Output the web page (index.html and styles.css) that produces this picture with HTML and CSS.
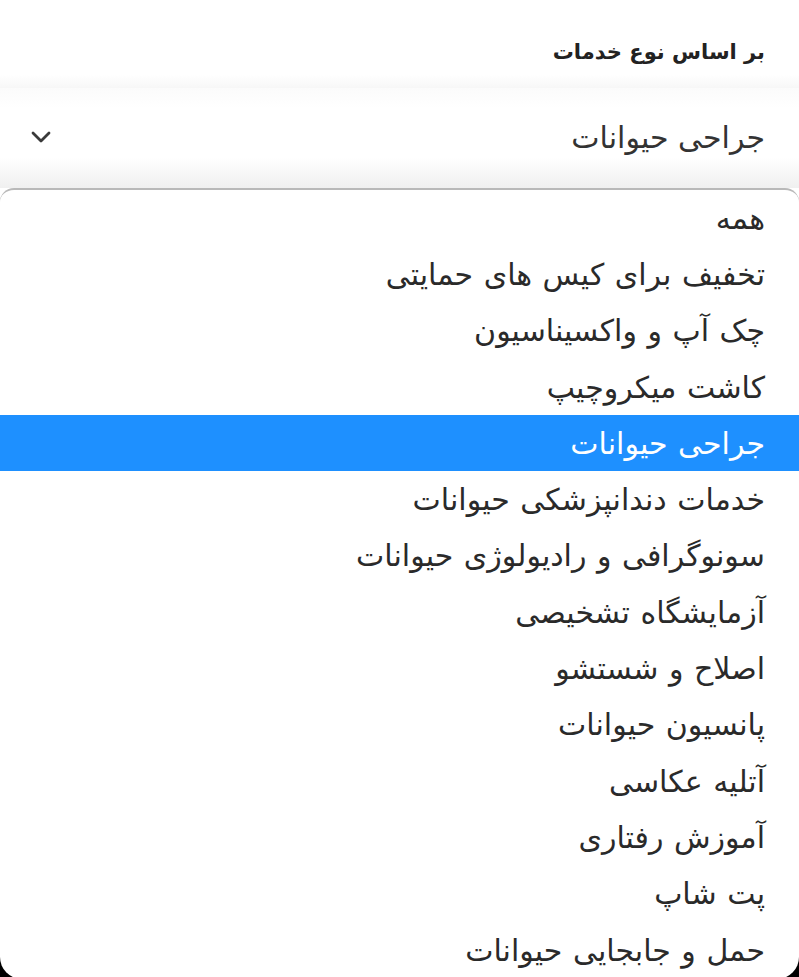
FILE: index.html
```html
<!DOCTYPE html>
<html lang="fa" dir="rtl">
<head>
<meta charset="utf-8">
<link rel="stylesheet" href="styles.css">
</head>
<body>
<div class="page">
  <div class="title">بر اساس نوع خدمات</div>
  <div class="select">
    <span class="select-value">جراحی حیوانات</span>
    <svg class="chevron" width="24" height="14" viewBox="0 0 24 14"><path d="M4 3 L12 11 L20 3" fill="none" stroke="#3a3a3a" stroke-width="2.8" stroke-linecap="round" stroke-linejoin="round"/></svg>
  </div>
  <div class="frame">
    <ul class="list">
      <li class="item">همه</li>
      <li class="item">تخفیف برای کیس های حمایتی</li>
      <li class="item">چک آپ و واکسیناسیون</li>
      <li class="item">کاشت میکروچیپ</li>
      <li class="item selected">جراحی حیوانات</li>
      <li class="item">خدمات دندانپزشکی حیوانات</li>
      <li class="item">سونوگرافی و رادیولوژی حیوانات</li>
      <li class="item">آزمایشگاه تشخیصی</li>
      <li class="item">اصلاح و شستشو</li>
      <li class="item">پانسیون حیوانات</li>
      <li class="item">آتلیه عکاسی</li>
      <li class="item">آموزش رفتاری</li>
      <li class="item">پت شاپ</li>
      <li class="item">حمل و جابجایی حیوانات</li>
    </ul>
  </div>
</div>
</body>
</html>
```
FILE: styles.css
```css
html, body {
  margin: 0;
  padding: 0;
  background: #ffffff;
}
body {
  font-family: "DejaVu Sans", "Noto Sans", sans-serif;
  color: #2a2a2a;
  height: 977px;
  overflow: hidden;
}
.page {
  display: flex;
  flex-direction: column;
}
.title {
  height: 88px;
  box-sizing: border-box;
  padding: 34px 34px 0 0;
  font-size: 21px;
  font-weight: bold;
  color: #222;
  line-height: 36px;
  background: linear-gradient(to bottom, #ffffff 85%, #f7f7f7 100%);
}
.select {
  height: 100px;
  box-sizing: border-box;
  display: flex;
  align-items: center;
  justify-content: space-between;
  padding: 0 34px 2px 29px;
  background: linear-gradient(to bottom, #fbfbfb 0%, #ffffff 20%, #ffffff 70%, #f0f0f0 100%);
}
.select-value {
  font-size: 30px;
  color: #333;
}
.chevron {
  display: block;
}
.frame {
  background: linear-gradient(to bottom, transparent 0, transparent calc(100% - 30px), #000 calc(100% - 30px));
}
.list {
  list-style: none;
  margin: 0;
  padding: 0;
  background: #fff;
  border-top: 2px solid #b9b9b9;
  border-radius: 14px 14px 22px 22px;
  height: 789px;
  overflow: hidden;
}
.item {
  height: 56.3px;
  box-sizing: border-box;
  display: flex;
  align-items: center;
  padding-right: 34px;
  font-size: 30px;
  word-spacing: 1px;
  color: #2a2a2a;
}
.item.selected {
  background: #1e90ff;
  color: #ffffff;
}
```
